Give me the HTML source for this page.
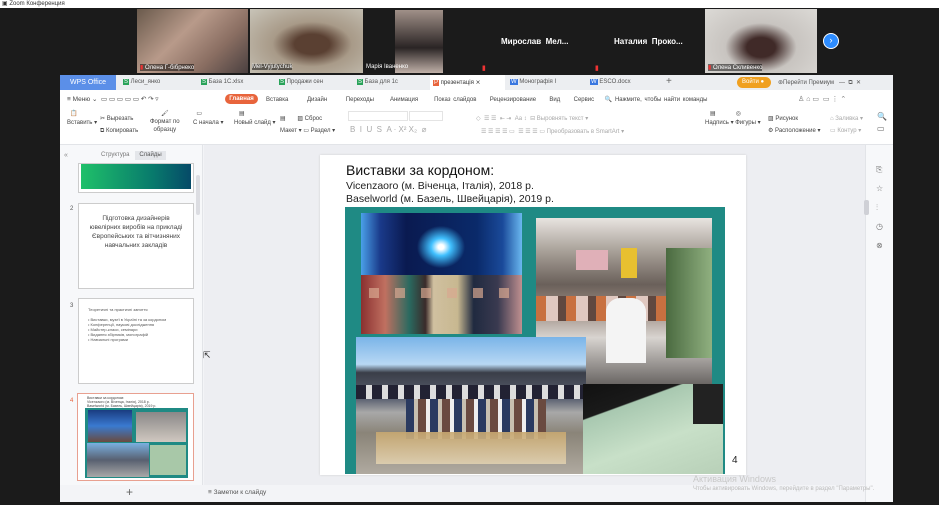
<!DOCTYPE html><html><head><meta charset="utf-8"><style>
*{margin:0;padding:0;box-sizing:border-box}
body{width:939px;height:505px;background:#1b1b1b;position:relative;overflow:hidden;font-family:"Liberation Sans","DejaVu Sans",sans-serif;font-size:7px;color:#333}
.a{position:absolute}
.t{white-space:nowrap}
</style></head><body>
<div class="a" style="left:0;top:0;width:939px;height:8px;background:#fff"></div>
<div class="a t" style="left:2px;top:0;font-size:6px;color:#333">▣ Zoom Конференция</div>
<div class="a" style="left:137px;top:9px;width:111px;height:64px;background:linear-gradient(135deg,#6a5a4c,#b89a8a 40%,#8a6e62 70%,#4a4040)"></div>
<div class="a" style="left:250px;top:9px;width:113px;height:64px;background:radial-gradient(ellipse at 55% 55%,#5a4032 0 20%,#a89a88 45%,#c8c4b8)"></div>
<div class="a" style="left:395px;top:10px;width:48px;height:63px;background:linear-gradient(#a09088,#2a2424 60%,#c0b0a8)"></div>
<div class="a" style="left:705px;top:9px;width:112px;height:64px;background:radial-gradient(ellipse at 50% 60%,#402a28 0 18%,#c8c4c0 45%,#dcdad6)"></div>
<div class="a t" style="left:501px;top:37px;font-size:8px;color:#fff;font-weight:bold">Мирослав&nbsp; Мел...</div>
<div class="a t" style="left:614px;top:37px;font-size:8px;color:#fff;font-weight:bold">Наталия&nbsp; Проко...</div>
<div class="a" style="left:823px;top:33px;width:16px;height:16px;border-radius:50%;background:#2d8cff;border:1.5px solid #fff;color:#fff;font-size:9px;text-align:center;line-height:13px">›</div>
<div class="a t" style="left:140px;top:64px;font-size:6px;color:#fff;background:rgba(0,0,0,.5)"><span style="color:#e33">▮</span> Олена Г-бібрнеко</div>
<div class="a t" style="left:252px;top:64px;font-size:6px;color:#fff;background:rgba(0,0,0,.5)">Mel-Vyjutychuk</div>
<div class="a t" style="left:366px;top:64px;font-size:6px;color:#fff">Марія Іваненко</div>
<div class="a t" style="left:708px;top:64px;font-size:6px;color:#fff;background:rgba(0,0,0,.5)"><span style="color:#e33">▮</span> Олена Скливенко</div>
<div class="a" style="left:482px;top:64px;color:#e33;font-size:7px">▮</div>
<div class="a" style="left:595px;top:64px;color:#e33;font-size:7px">▮</div>
<div class="a" style="left:60px;top:75px;width:833px;height:427px;background:#f3f4f7"></div>
<div class="a" style="left:60px;top:75px;width:833px;height:15px;background:#eceef1"></div>
<div class="a t" style="left:60px;top:75px;width:56px;height:15px;background:#5b8fe8;color:#fff;text-align:center;line-height:15px;font-size:7px">WPS Office</div>
<div class="a t" style="left:123px;top:79px;font-size:6px;color:#555"><span style="background:#2aa35a;color:#fff;padding:0 1px">S</span> Леси_янко</div>
<div class="a t" style="left:201px;top:79px;font-size:6px;color:#555"><span style="background:#2aa35a;color:#fff;padding:0 1px">S</span> База 1С.xlsx</div>
<div class="a t" style="left:279px;top:79px;font-size:6px;color:#555"><span style="background:#2aa35a;color:#fff;padding:0 1px">S</span> Продажи сен</div>
<div class="a t" style="left:357px;top:79px;font-size:6px;color:#555"><span style="background:#2aa35a;color:#fff;padding:0 1px">S</span> База для 1с</div>
<div class="a" style="left:430px;top:75px;width:75px;height:15px;background:#fff"></div>
<div class="a t" style="left:433px;top:79px;font-size:6px;color:#333"><span style="background:#e8643c;color:#fff;padding:0 1px">P</span> презентація ⨯</div>
<div class="a t" style="left:510px;top:79px;font-size:6px;color:#555"><span style="background:#3a78e0;color:#fff;padding:0 1px">W</span> Монографія I</div>
<div class="a t" style="left:590px;top:79px;font-size:6px;color:#555"><span style="background:#3a78e0;color:#fff;padding:0 1px">W</span> ESCO.docx</div>
<div class="a t" style="left:666px;top:76px;font-size:10px;color:#666">+</div>
<div class="a t" style="left:737px;top:77px;width:34px;height:11px;border-radius:6px;background:#f0a020;color:#fff;font-size:6px;line-height:11px;padding-left:5px">Войти ●</div>
<div class="a t" style="left:778px;top:79px;font-size:6px;color:#555">⊛Перейти Премиум &nbsp; — &nbsp;⧉ &nbsp;✕</div>
<div class="a" style="left:60px;top:90px;width:833px;height:55px;background:#fff;border-bottom:1px solid #e2e4e8"></div>
<div class="a t" style="left:67px;top:95px;font-size:6.5px;color:#444">≡ Меню ⌄ &nbsp;▭ ▭ ▭ ▭ ▭ ↶ ↷ ▿</div>
<div class="a t" style="left:225px;top:94px;width:33px;height:10px;border-radius:5px;background:#e8643c;color:#fff;font-size:6px;line-height:10px;text-align:center;font-weight:bold">Главная</div>
<div class="a t" style="left:266px;top:96px;font-size:6px;color:#444;word-spacing:1px">Вставка &nbsp;&nbsp;&nbsp;&nbsp;&nbsp; Дизайн &nbsp;&nbsp;&nbsp;&nbsp;&nbsp; Переходы &nbsp;&nbsp;&nbsp;&nbsp; Анимация &nbsp;&nbsp;&nbsp;&nbsp; Показ слайдов &nbsp;&nbsp;&nbsp; Рецензирование &nbsp;&nbsp;&nbsp; Вид &nbsp;&nbsp;&nbsp; Сервис &nbsp;&nbsp; 🔍 Нажмите, чтобы найти команды</div>
<div class="a t" style="left:798px;top:95px;font-size:7px;color:#777">♙ ⌂ ▭ &nbsp;▭ ⋮ ⌃</div>
<div class="a t" style="left:67px;top:110px;font-size:6px;color:#444;line-height:9px">&nbsp;&nbsp;📋<br>Вставить ▾</div>
<div class="a t" style="left:100px;top:113px;font-size:6px;color:#444;line-height:12px">✂ Вырезать<br>⧉ Копировать</div>
<div class="a t" style="left:150px;top:110px;font-size:6px;color:#444;line-height:8px;text-align:center">🖌<br>Формат по<br>образцу</div>
<div class="a t" style="left:193px;top:110px;font-size:6px;color:#444;line-height:9px">&nbsp;&nbsp;▭<br>С начала ▾</div>
<div class="a t" style="left:234px;top:110px;font-size:6px;color:#444;line-height:9px">&nbsp;&nbsp;&nbsp;▤<br>Новый слайд ▾</div>
<div class="a t" style="left:280px;top:113px;font-size:6px;color:#444;line-height:12px">▤ &nbsp;&nbsp;&nbsp;&nbsp;&nbsp;&nbsp;▨ Сброс<br>Макет ▾ ▭ Раздел ▾</div>
<div class="a" style="left:348px;top:111px;width:60px;height:10px;border:1px solid #e4e4e4"></div>
<div class="a" style="left:409px;top:111px;width:34px;height:10px;border:1px solid #e4e4e4"></div>
<div class="a t" style="left:350px;top:125px;font-size:8px;color:#aaa">B &nbsp;I &nbsp;U &nbsp;S &nbsp;A · X² X₂ &nbsp;⌀</div>
<div class="a t" style="left:476px;top:113px;font-size:6px;color:#aaa;line-height:13px">◇ &nbsp;☰ ☰ &nbsp;⇤ ⇥ &nbsp;Aa ↕ &nbsp;⊟ Выровнять текст ▾<br>&nbsp;&nbsp;&nbsp;☰ ☰ ☰ ☰ ▭ &nbsp;☰ ☰ ☰ ▭ Преобразовать в SmartArt ▾</div>
<div class="a t" style="left:705px;top:110px;font-size:6px;color:#444;line-height:9px">&nbsp;&nbsp;&nbsp;▤ &nbsp;&nbsp;&nbsp;&nbsp;&nbsp;&nbsp;&nbsp;&nbsp;&nbsp;&nbsp;&nbsp;◎<br>Надпись ▾ Фигуры ▾</div>
<div class="a t" style="left:768px;top:113px;font-size:6px;color:#444;line-height:12px">▨ Рисунок<br>⚙ Расположение ▾</div>
<div class="a t" style="left:830px;top:113px;font-size:6px;color:#aaa;line-height:12px">⌂ Заливка ▾<br>▭ Контур ▾</div>
<div class="a t" style="left:877px;top:111px;font-size:8px;color:#666;line-height:12px">🔍<br>▭</div>
<div class="a" style="left:60px;top:145px;width:143px;height:340px;background:#f7f8fa;border-right:1px solid #e2e4e8"></div>
<div class="a t" style="left:64px;top:152px;font-size:7px;color:#888">«</div>
<div class="a t" style="left:101px;top:152px;font-size:6px;color:#777">Структура</div>
<div class="a t" style="left:135px;top:151px;width:31px;height:9px;background:#e4e6ea;font-size:6px;color:#555;text-align:center;line-height:9px">Слайды</div>
<div class="a" style="left:78px;top:163px;width:116px;height:30px;background:#fff;border:1px solid #ccc;padding:0 2px 3px"><div style="height:25px;background:linear-gradient(90deg,#1fc06a,#087a6c 65%,#064a68)"></div></div>
<div class="a" style="left:196px;top:175px;width:4px;height:40px;background:#dcdde2;border-radius:2px"></div>
<div class="a t" style="left:70px;top:206px;font-size:6px;color:#555">2</div>
<div class="a" style="left:78px;top:203px;width:116px;height:86px;background:#fff;border:1px solid #ccc;font-size:6.5px;text-align:center;line-height:9px;padding-top:10px;color:#444">Підготовка дизайнерів<br>ювелірних виробів на прикладі<br>Європейських та вітчизняних<br>навчальних закладів</div>
<div class="a t" style="left:70px;top:303px;font-size:6px;color:#555">3</div>
<div class="a" style="left:78px;top:298px;width:116px;height:86px;background:#fff;border:1px solid #ccc;font-size:4px;color:#555;padding:8px 0 0 9px;line-height:5px">Теоретичні та практичні заняття<br><br>• Виставки, музеї в Україні та за кордоном<br>• Конференції, наукові дослідження<br>• Майстер-класи, семінари<br>• Видання збірників, монографій<br>• Навчальні програми</div>
<div class="a t" style="left:70px;top:398px;font-size:6px;color:#e8643c">4</div>
<div class="a" style="left:77px;top:393px;width:117px;height:88px;background:#fff;border:1.5px solid #e8a090"></div>
<div class="a" style="left:85px;top:408px;width:103px;height:70px;background:#1f8a84"></div>
<div class="a" style="left:88px;top:410px;width:44px;height:32px;background:linear-gradient(#1a3c80,#3a7ad0 50%,#6a4a40)"></div>
<div class="a" style="left:136px;top:412px;width:50px;height:30px;background:linear-gradient(#8a8888,#d0c8c0)"></div>
<div class="a" style="left:87px;top:443px;width:62px;height:34px;background:linear-gradient(#7ab0e0,#586070 50%,#a8a8a8)"></div>
<div class="a" style="left:150px;top:445px;width:36px;height:30px;background:#a8c8a8"></div>
<div class="a t" style="left:87px;top:396px;font-size:3.5px;color:#444;line-height:4px">Виставки за кордоном:<br>Vicenzaoro (м. Віченца, Італія), 2018 р.<br>Baselworld (м. Базель, Швейцарія), 2019 р.</div>
<div class="a t" style="left:126px;top:485px;font-size:12px;color:#666">+</div>
<div class="a" style="left:204px;top:145px;width:661px;height:340px;background:#edeef2"></div>
<div class="a" style="left:865px;top:145px;width:28px;height:357px;background:#f7f8fa;border-left:1px solid #e2e4e8"></div>
<div class="a" style="left:864px;top:200px;width:5px;height:15px;background:#cfd0d6;border-radius:2px"></div>
<div class="a t" style="left:876px;top:160px;font-size:8px;color:#777;line-height:19px">⎘<br>☆<br>⫶<br>◷<br>⊗</div>
<div class="a" style="left:320px;top:155px;width:426px;height:320px;background:#fff;box-shadow:0 0 2px #ccc"></div>
<div class="a t" style="left:346px;top:162px;font-size:14px;color:#111">Виставки за кордоном:</div>
<div class="a t" style="left:346px;top:180px;font-size:10.5px;color:#222;line-height:13px">Vicenzaoro (м. Віченца, Італія), 2018 р.<br>Baselworld (м. Базель, Швейцарія), 2019 р.</div>
<div class="a" style="left:345px;top:207px;width:380px;height:267px;background:#1f8a84"></div>
<div class="a" style="left:361px;top:213px;width:161px;height:121px;background:linear-gradient(90deg,#4aa0e8,#1a3a8a 12%,#0a1a50 28%,#0a2a6a 72%,#1a4a9a 88%,#6ab8f0);overflow:hidden">
 <div style="position:absolute;left:55px;top:12px;width:50px;height:44px;border-radius:50%;background:radial-gradient(#fff 0 8%,#40c0ff 28%,transparent 68%)"></div>
 <div style="position:absolute;left:0;top:62px;width:161px;height:59px;background:linear-gradient(90deg,#8a3030,#c07060 15%,#2a6a60 30%,#3a2a2a 40%,#d0c0a0 45%,#c8b890 60%,#202a40 70%,#3a3a50 85%,#c09090)"></div>
 <div style="position:absolute;left:0;top:75px;width:161px;height:10px;background:repeating-linear-gradient(90deg,transparent 0 8px,#d8a890 8px 18px,transparent 18px 26px);opacity:.7"></div>
</div>
<div class="a" style="left:536px;top:218px;width:176px;height:166px;background:linear-gradient(#e8e4e0,#a8a098 20%,#6a605a 40%,#9a8a80 55%,#d8d4d0 72%,#6a6664);overflow:hidden">
 <div style="position:absolute;left:40px;top:32px;width:32px;height:20px;background:#e0b0b8"></div>
 <div style="position:absolute;left:85px;top:30px;width:16px;height:30px;background:#e8c030"></div>
 <div style="position:absolute;left:130px;top:30px;width:46px;height:110px;background:linear-gradient(90deg,#4a6a40,#90b080)"></div>
 <div style="position:absolute;left:0;top:78px;width:130px;height:25px;background:repeating-linear-gradient(90deg,#c87040 0 10px,#e0c8c0 10px 22px,#604840 22px 30px)"></div>
 <div style="position:absolute;left:70px;top:80px;width:40px;height:65px;background:#f4f4f4;border-radius:14px 14px 0 0"></div>
</div>
<div class="a" style="left:356px;top:337px;width:230px;height:137px;background:linear-gradient(#7ab4e8 0,#b8d8f4 20%,#3a3e48 26%,#5a6070 45%,#a8a8a8 55%,#8a8478 70%,#b0aaa0);overflow:hidden">
 <div style="position:absolute;left:0;top:48px;width:230px;height:14px;background:repeating-linear-gradient(90deg,#223 0 10px,#ddd 10px 16px)"></div>
 <div style="position:absolute;left:50px;top:62px;width:140px;height:40px;background:repeating-linear-gradient(90deg,#2a3a60 0 8px,#c8c0b0 8px 12px,#6a4a40 12px 20px,#eee 20px 24px)"></div>
 <div style="position:absolute;left:20px;top:95px;width:190px;height:32px;background:linear-gradient(#c8a870,#e0d0b0);opacity:.9"></div>
</div>
<div class="a" style="left:583px;top:384px;width:140px;height:90px;background:linear-gradient(160deg,#111 0,#1a1a1a 25%,#a8c8b0 26%,#c8e0c8 60%,#b8d0b8);overflow:hidden">
 <div style="position:absolute;left:110px;top:0;width:30px;height:40px;background:#222"></div>
</div>
<div class="a t" style="left:732px;top:455px;font-size:10px;color:#222">4</div>
<div class="a" style="left:204px;top:485px;width:661px;height:17px;background:#f3f4f7"></div>
<div class="a t" style="left:208px;top:489px;font-size:6.5px;color:#555">≡ Заметки к слайду</div>
<div class="a t" style="left:693px;top:474px;font-size:9px;color:#c8c8c8">Активация Windows</div>
<div class="a t" style="left:693px;top:486px;font-size:6px;color:#bbb">Чтобы активировать Windows, перейдите в раздел "Параметры".</div>
<div class="a t" style="left:203px;top:350px;font-size:9px;color:#333">⇱</div>
</body></html>
